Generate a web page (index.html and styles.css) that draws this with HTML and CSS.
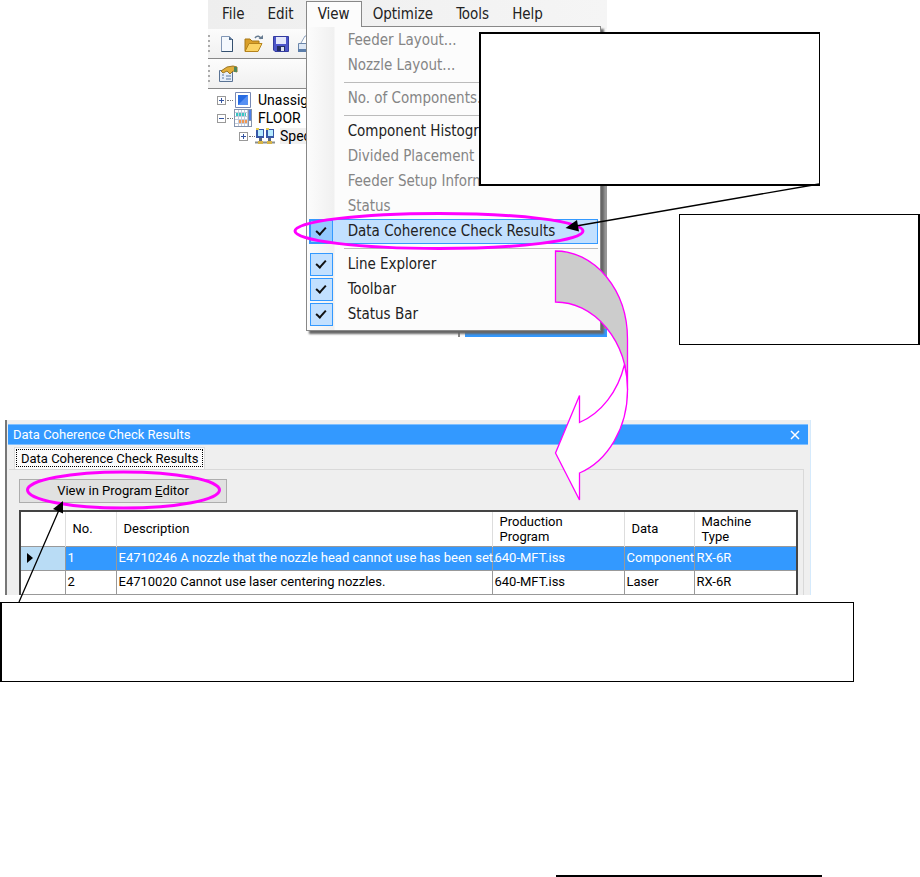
FILE: index.html
```html
<!DOCTYPE html>
<html lang="en">
<head>
  <meta charset="UTF-8" />
  <meta name="viewport" content="width=device-width, initial-scale=1.0"/>
  <title>Data Coherence Check Results</title>
  <link rel="stylesheet" href="styles.css">
</head>
<body>
  <main class="page">
    <section class="app">
      <nav class="menubar">
        <button>File</button>
        <button>Edit</button>
        <div class="menu-open">
          <button class="active">View</button>
          <div class="menu">
            <button class="item" disabled>Feeder Layout...</button>
            <button class="item" disabled>Nozzle Layout...</button>
            <hr>
            <button class="item" disabled>No. of Components.</button>
            <hr>
            <button class="item">Component Histogr</button>
            <button class="item" disabled>Divided Placement</button>
            <button class="item" disabled>Feeder Setup Inform</button>
            <button class="item" disabled>Status</button>
            <label class="item selected"><input type="checkbox" checked>Data Coherence Check Results</label>
            <hr>
            <label class="item"><input type="checkbox" checked>Line Explorer</label>
            <label class="item"><input type="checkbox" checked>Toolbar</label>
            <label class="item"><input type="checkbox" checked>Status Bar</label>
          </div>
        </div>
        <button>Optimize</button>
        <button>Tools</button>
        <button>Help</button>
      </nav>

      <div class="toolbar">
        <span class="grip"></span>
        <button aria-label="New">
          <svg width="18" height="18" viewBox="0 0 18 18">
            <path d="M3.500 1.500h8l3 3v12h-11z" fill="#f4f8fd" stroke="#8196b5"/>
            <path d="M14.500 4v12.500h-11" fill="none" stroke="#34506f"/>
            <path d="M11 1.500v3.500h3.500z" fill="#4b6788"/>
          </svg>
        </button>
        <button aria-label="Open">
          <svg width="20" height="18" viewBox="0 0 20 18">
            <path d="M1 16V4h5l2 2h7v3" fill="#d99f29" stroke="#a77818"/>
            <path d="M1 16.500l4-8h13l-4 8z" fill="#fbd364" stroke="#b5831c"/>
            <path d="M11 3c2-3 5-2 6 1" fill="none" stroke="#667b91" stroke-width="1.500"/>
            <path d="M14.500 4H19V0z" fill="#667b91"/>
          </svg>
        </button>
        <button aria-label="Save">
          <svg width="18" height="18" viewBox="0 0 18 18">
            <path d="M1.500 1.500h15v15H3l-1.500-1.500z" fill="#4d55c9" stroke="#343c9f"/>
            <path d="M4 2h10v7H4z" fill="#e4e7fb"/>
            <path d="M5 11h8v5H5z" fill="#252e64"/>
            <path d="M9 12h3v4H9z" fill="#dce1f0"/>
          </svg>
        </button>
        <button aria-label="Print">
          <svg width="20" height="18" viewBox="0 0 20 18">
            <path d="M3 8l4-7h9l-2 7" fill="#fff" stroke="#8ba1bf"/>
            <path d="M.500 8.500h16v7H.500z" fill="#dde7f4" stroke="#6b86aa"/>
            <path d="M0 14h17v3H0z" fill="#5b7da9"/>
          </svg>
        </button>
      </div>
      <div class="toolbar">
        <span class="grip"></span>
        <button aria-label="Properties">
          <svg width="20" height="18" viewBox="0 0 20 18">
            <path d="M1.500 5.500h13v11h-13z" fill="#e5eef9" stroke="#5a7394"/>
            <path d="M4 10h2M4 13h2M8 11h5M8 14h5" stroke="#58779f"/>
            <path d="M3 6l6-4 6-1 4 1v5l-4-1-3 3-3-3-4 2z" fill="#e2ae3a" stroke="#9a7625"/>
            <path d="M16 2h3v5h-3z" fill="#51875b"/>
          </svg>
        </button>
      </div>

      <div class="workspace">
        <ul class="tree">
          <li>
            <span class="expander plus"></span>
            <svg width="20" height="18" viewBox="0 0 20 18">
              <path d="M2.500 1.500h15v15h-15z" fill="#fff" stroke="#7789b5"/>
              <path d="M5 4h10v10H5z" fill="#276be2"/>
              <path d="M5 14L15 4v10z" fill="#5790f3"/>
            </svg>
            <span>Unassign</span>
          </li>
          <li>
            <span class="expander"></span>
            <svg width="20" height="18" viewBox="0 0 20 18">
              <path d="M1 0h18v18H1z" fill="#8594ad"/>
              <path d="M2 1h13v16H2z" fill="#fff"/>
              <path d="M3 4h10v3H3z" fill="#39c7c3"/>
              <path d="M5 11h10v3H5z" fill="#f29852"/>
              <path d="M16 1h2v10h-2z" fill="#4c80e9"/>
              <path d="M16 12h2v5h-2z" fill="#fff"/>
              <path d="M5.500 1v16M8.500 1v16M11.500 1v16M14.500 1v16M2 3.500h13M2 7.500h13M2 10.500h13M2 14.500h13" stroke="#c3ccdc"/>
            </svg>
            <span>FLOOR</span>
          </li>
          <li class="child">
            <span class="expander plus"></span>
            <svg width="20" height="18" viewBox="0 0 20 18">
              <path d="M1 2h8v9H1zM11 2h8v9h-8z" fill="#3657a6"/>
              <path d="M3 3h5v6H3zM13 3h5v6h-5z" fill="#b7ebff"/>
              <path d="M4 11h3v4H4zM13 11h3v4h-3z" fill="#5b6880"/>
              <path d="M0 15.500h20" stroke="#8b8f8c" stroke-width="2"/>
              <path d="M3 14h5v3H3zM12 14h5v3h-5z" fill="#d7b447"/>
              <path d="M1 1h3v2H1zM11 1h3v2h-3z" fill="#e5ca4e"/>
            </svg>
            <span class="node">Spec</span>
          </li>
        </ul>
        <div class="client"></div>
      </div>
    </section>

    <section class="panel">
      <header class="titlebar">
        <span>Data Coherence Check Results</span>
        <button aria-label="Close">
          <svg width="10" height="10" viewBox="0 0 10 10"><path d="M1 1l8 8M9 1L1 9" stroke="#fff" stroke-width="1.500"/></svg>
        </button>
      </header>
      <div class="tabs"><button class="tab">Data Coherence Check Results</button></div>
      <div class="tab-page">
        <button class="view-button">View in Program <u>E</u>ditor</button>
        <table class="results">
          <colgroup>
            <col class="col-mark"><col class="col-no"><col><col class="col-program"><col class="col-data"><col class="col-type">
          </colgroup>
          <thead>
            <tr>
              <th></th>
              <th>No.</th>
              <th>Description</th>
              <th>Production<br>Program</th>
              <th>Data</th>
              <th>Machine<br>Type</th>
            </tr>
          </thead>
          <tbody>
            <tr class="current">
              <td class="mark"><svg width="6" height="10" viewBox="0 0 6 10"><path d="M0 0l6 5-6 5z"/></svg></td>
              <td>1</td>
              <td>E4710246 A nozzle that the nozzle head cannot use has been set.</td>
              <td>640-MFT.iss</td>
              <td>Component</td>
              <td>RX-6R</td>
            </tr>
            <tr>
              <td></td>
              <td>2</td>
              <td>E4710020 Cannot use laser centering nozzles.</td>
              <td>640-MFT.iss</td>
              <td>Laser</td>
              <td>RX-6R</td>
            </tr>
          </tbody>
        </table>
      </div>
    </section>

    <div class="note"></div>
    <hr class="rule">

    <div class="callout callout-menu"></div>
    <div class="callout callout-side"></div>

    <svg class="marks" width="920" height="690" viewBox="0 0 920 690">
      <g fill="none" stroke="#f0f" stroke-width="3">
        <ellipse cx="439" cy="231" rx="144" ry="17.500"/>
        <ellipse cx="123.500" cy="490" rx="96" ry="18"/>
      </g>
      <!-- curved arrow from the menu to the panel -->
      <g stroke="#f0f" stroke-width="1.300">
        <path fill="#ccc" d="M555.500 251A72 88 0 0 1 627.500 339V390A72 88 0 0 0 555.500 302z"/>
        <path fill="#fff" d="M627.500 390A72 88 0 0 1 579.500 473V500L555.500 453L579.500 395.500V422.500A72 88 0 0 0 624.500 364.500A72 88 0 0 1 627.500 390z"/>
      </g>
      <g stroke="#000" stroke-width="1.300">
        <path d="M819 184L576 226M19 602L59 510"/>
        <path stroke="none" d="M565.500 228l11.500-8 2 11.500zM63 501l0 12.500-10-4.500z"/>
      </g>
    </svg>
  </main>
</body>
</html>
```
FILE: styles.css
```css
* {
  box-sizing: border-box;
}
body {
  margin: 0;
  background: #fff;
  color: #000;
  font: 13px/16px Roboto, sans-serif;
}
button {
  margin: 0;
  padding: 0;
  border: 0;
  background: none;
  color: inherit;
  font: inherit;
}
svg {
  display: block;
  flex: none;
}
.page {
  position: relative;
}

/* application window */
.app {
  display: flex;
  flex-direction: column;
  width: 399px;
  height: 337px;
  margin-left: 208px;
}
.menubar {
  display: flex;
  height: 29px;
  padding: 1px 0 2px 3px;
  background: linear-gradient(90deg, #eee, #f5f5f5);
  color: #222;
  font: 15px/25px "DejaVu Sans Condensed", "DejaVu Sans", sans-serif;
}
.menubar > button {
  padding: 0 12px 0 11px;
}
.menu-open {
  position: relative;
}
.active {
  position: relative;
  z-index: 2;
  height: 26px;
  width: 56px;
  background: #fcfcfc;
  border: 1px solid #888;
  border-bottom: 0;
}
.menu {
  position: absolute;
  top: 25px;
  left: 0;
  width: 295px;
  padding: 1px 2px 3px;
  border: 1px solid #888;
  background: linear-gradient(90deg, #fcfcfc, #f0f0f0 27px, #fcfcfc 28px);
  box-shadow: 3px 3px 2px #666;
}
.item {
  display: flex;
  align-items: center;
  width: 100%;
  height: 25px;
  padding-left: 39px;
  white-space: nowrap;
}
.item:disabled {
  color: #858585;
}
.item input {
  appearance: none;
  display: grid;
  place-items: center;
  flex: none;
  width: 23px;
  height: 23px;
  margin: 0 15px 0 -38px;
  border: 1px solid #39f;
  background: #c2e0ff;
}
.item input::before {
  content: "";
  width: 8px;
  height: 4px;
  margin-bottom: 3px;
  border: solid #111;
  border-width: 0 0 2px 2px;
  transform: rotate(-48deg);
}
.selected {
  border: 1px solid #39f;
  background: #c2e0ff;
  padding-left: 38px;
}
.selected input {
  background: #94caff;
}
.menu hr {
  height: 8px;
  margin: 0 0 0 35px;
  border: 0;
  background: linear-gradient(#bbb, #bbb) 0 4px / 100% 1px no-repeat;
}
.toolbar {
  display: flex;
  align-items: center;
  gap: 8px;
  height: 30px;
  border-bottom: 1px solid #888;
  background: linear-gradient(#fcfcfc, #f0f0f0);
}
.grip {
  width: 2px;
  height: 17px;
  background: repeating-linear-gradient(#aaa 0 2px, transparent 2px 5px);
}
.workspace {
  display: flex;
  flex: 1;
}
.tree {
  flex: 1;
  margin: 0;
  padding: 2px 0 0 9px;
  list-style: none;
  border-right: 2px solid #888;
}
.tree li {
  display: flex;
  align-items: center;
  height: 18px;
  font-size: 14px;
}
.tree li svg {
  margin: 0 5px 0 7px;
}
.tree .child {
  padding-left: 22px;
}
.tree .node {
  padding-right: 20px;
  background: #f0f0f0;
}
.expander {
  position: relative;
  flex: none;
  width: 9px;
  height: 9px;
  border: 1px solid #999;
  background: linear-gradient(#3454a0, #3454a0) center / 5px 1px no-repeat #fff;
}
.plus {
  background: linear-gradient(#3454a0, #3454a0) center / 5px 1px no-repeat,
    linear-gradient(#3454a0, #3454a0) center / 1px 5px no-repeat #fff;
}
.expander::after {
  content: "";
  position: absolute;
  left: 9px;
  top: 3px;
  width: 6px;
  border-top: 1px dotted #777;
}
.client {
  width: 142px;
  margin-left: 5px;
  border-bottom: 8px solid #39f;
  background: #999;
}

/* docked results panel */
.panel {
  height: 175px;
  margin: 83px 109px 0 5px;
  padding: 4px 2px 0;
  overflow: hidden;
  border-left: 2px solid #777;
  border-right: 1px solid #d5eafc;
  background: #efefef;
}
.titlebar {
  display: flex;
  align-items: center;
  justify-content: space-between;
  height: 21px;
  padding: 0 8px 0 5px;
  margin-left: -1px;
  border: solid #7fbfff;
  border-width: 1px 0;
  background: #39f;
  color: #fff;
}
.tabs {
  display: flex;
  padding: 2px 5px 0;
}
.tab {
  height: 22px;
  padding: 0 6px;
  border: 1px solid #ddd;
  border-bottom: 0;
  background: #fbfbfb;
  outline: 1px dotted #000;
  outline-offset: -3px;
}
.tab-page {
  margin-right: 4px;
  padding: 9px 5px 0 10px;
  border: solid #d9d9d9;
  border-width: 1px 1px 0 0;
}
.view-button {
  display: block;
  width: 208px;
  height: 24px;
  margin-bottom: 7px;
  border: 1px solid #adadad;
  background: #e1e1e1;
}
.results {
  width: 100%;
  table-layout: fixed;
  border-collapse: collapse;
  border: 2px solid #444;
  border-bottom: 0;
  background: #fff;
}
.col-mark {
  width: 45px;
}
.col-no {
  width: 51px;
}
.col-program {
  width: 132px;
}
.col-data {
  width: 70px;
}
.col-type {
  width: 103px;
}
.results th {
  height: 35px;
  padding: 0 7px;
  border-right: 1px solid #ddd;
  font-weight: normal;
  line-height: 15px;
  text-align: left;
}
.results td {
  height: 24px;
  padding: 0 2px;
  border: 1px solid #999;
  white-space: nowrap;
}
.results .current {
  background: #39f;
  color: #fff;
}
.results .mark {
  padding-left: 6px;
  background: #b9dcf5;
}

/* notes and drawing marks */
.note {
  height: 80px;
  margin: 7px 66px 0 0;
  border: 1px solid #000;
  border-left-width: 2px;
}
.rule {
  width: 266px;
  margin: 193px 98px 0 auto;
  border: 0;
  border-top: 2px solid #000;
}
.callout {
  position: absolute;
  border: 1px solid #000;
  background: #fff;
}
.callout-menu {
  top: 32px;
  left: 479px;
  z-index: 3;
  width: 341px;
  height: 154px;
  border-width: 2px 1px 2px 2px;
}
.callout-side {
  top: 214px;
  left: 679px;
  width: 241px;
  height: 131px;
  border-right-width: 2px;
}
.marks {
  position: absolute;
  top: 0;
  left: 0;
  z-index: 4;
  pointer-events: none;
}
```
